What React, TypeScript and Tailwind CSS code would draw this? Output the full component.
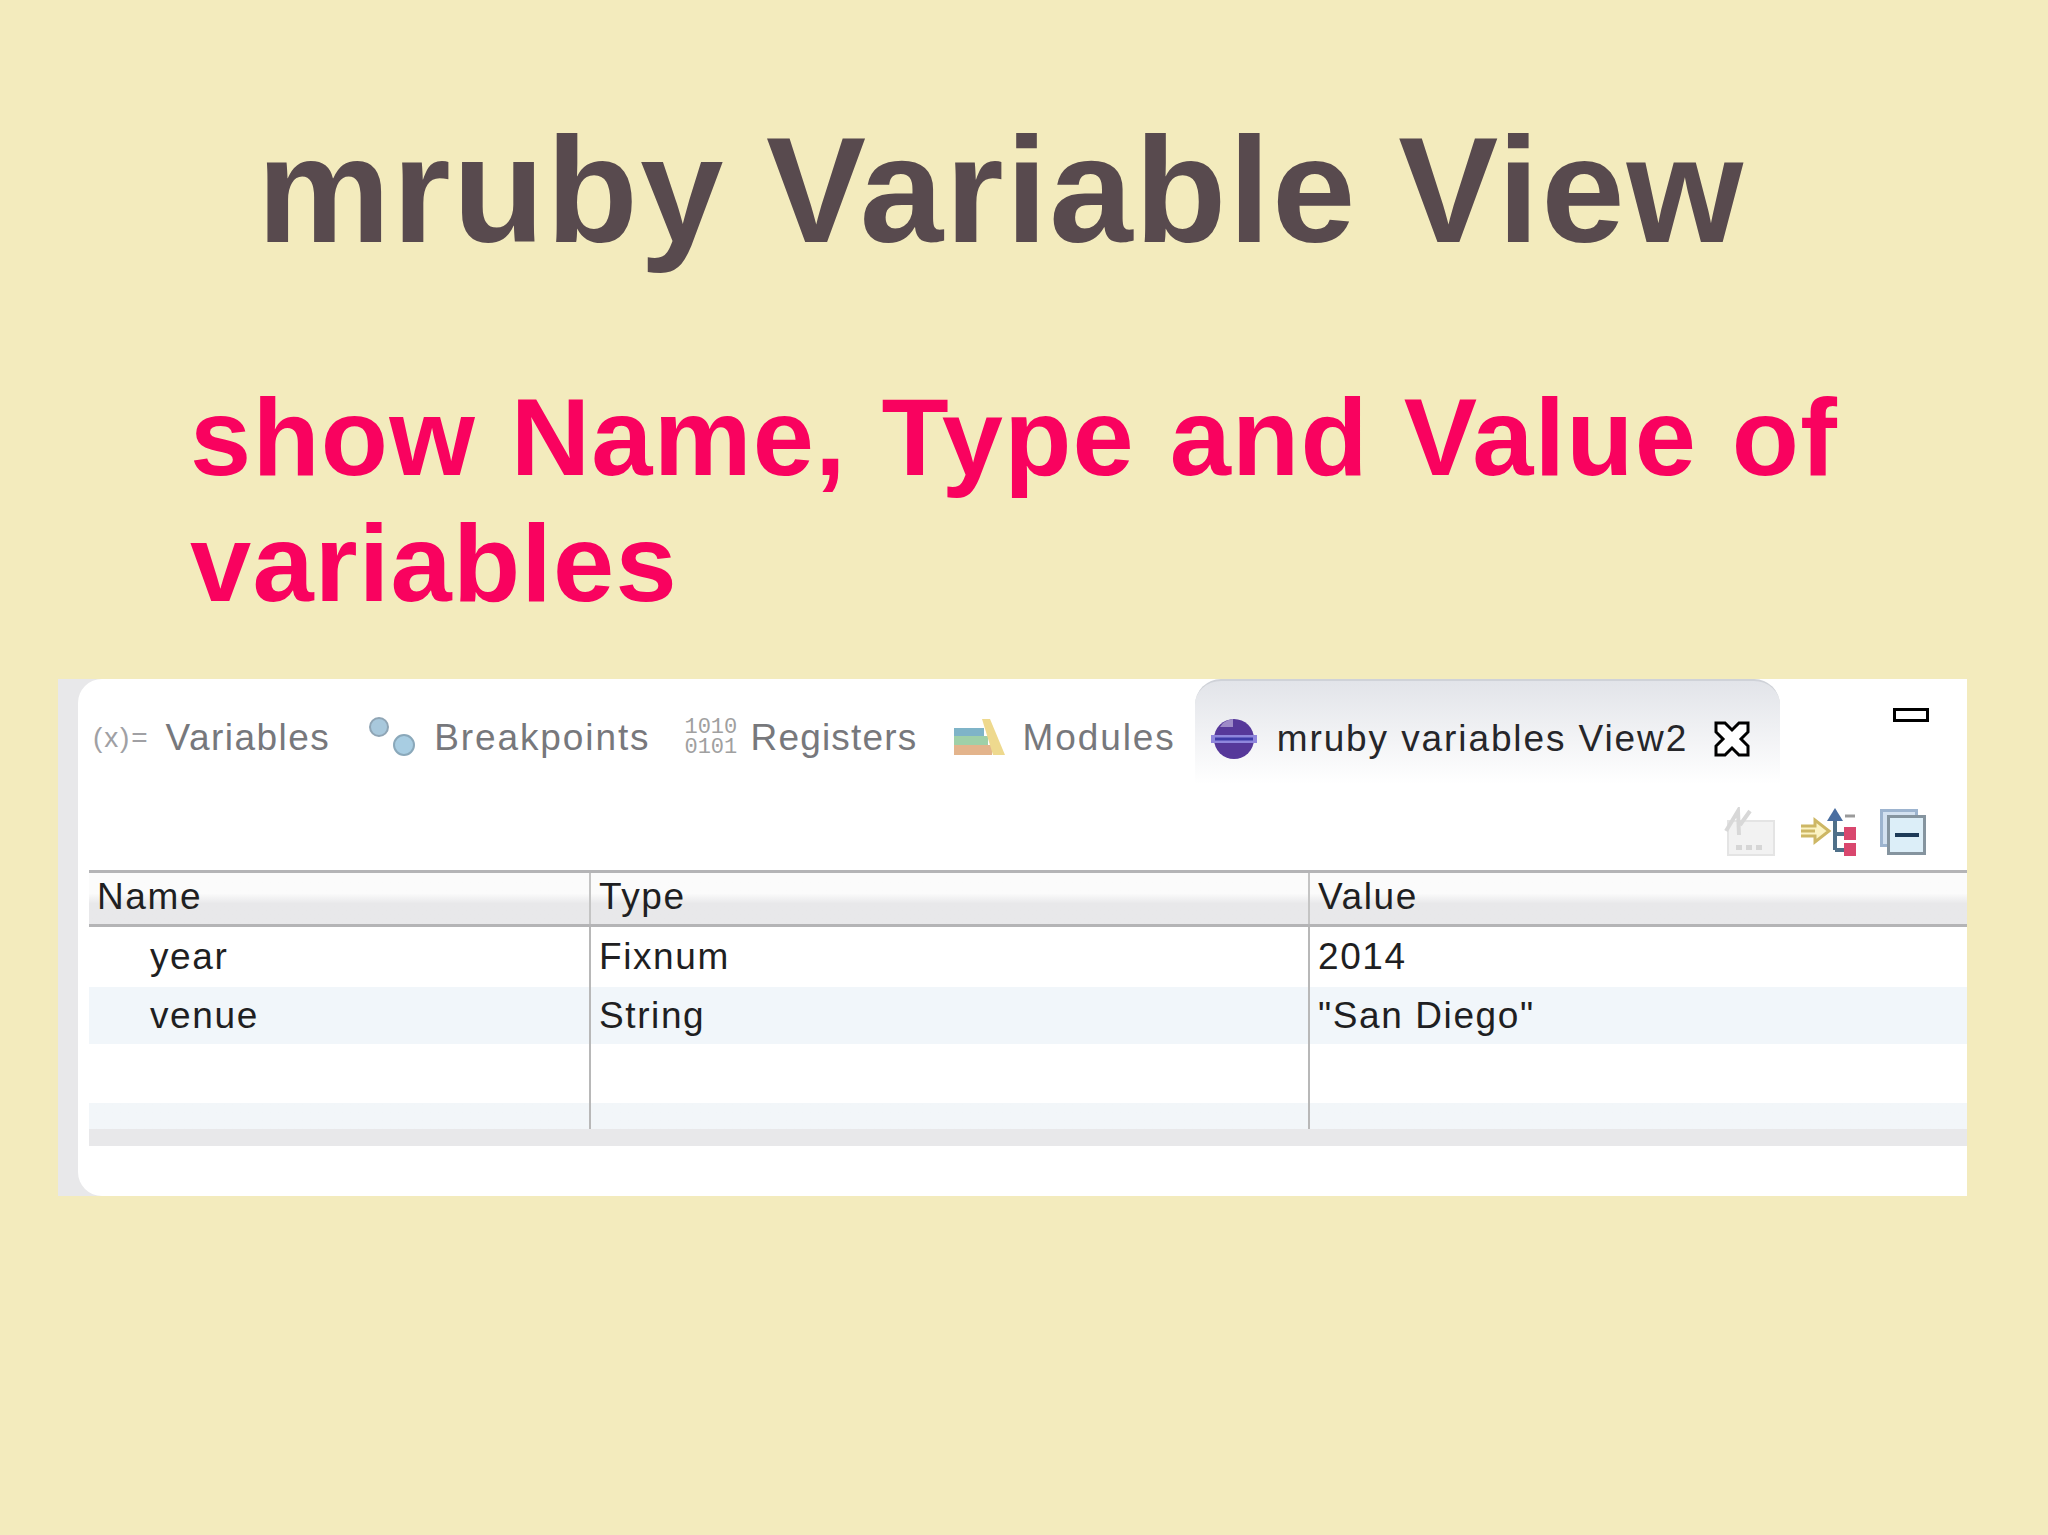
const sans = "font-['Liberation_Sans','Arial',sans-serif]";

const Dots = () => (
  <svg width="50" height="44" viewBox="0 0 50 44">
    <circle cx="11" cy="11" r="9" fill="#a8c8dc" stroke="#8fa5b5" strokeWidth="2" />
    <circle cx="36" cy="29" r="10" fill="#a8cde2" stroke="#8aa8ba" strokeWidth="2" />
  </svg>
);

const ModulesIcon = () => (
  <svg width="54" height="42" viewBox="0 0 54 42">
    <path d="M2 11h30v8H2z" fill="#7fb4c8" />
    <path d="M2 19h34v9H2z" fill="#9fd0a8" />
    <path d="M2 28h38v10H2z" fill="#e3b48c" />
    <path d="M30 2h8l15 36H41z" fill="#eed98e" />
  </svg>
);

const EclipseIcon = () => (
  <svg width="50" height="46" viewBox="0 0 50 46">
    <circle cx="25" cy="23" r="20" fill="#56389a" />
    <path d="M14 7a20 20 0 0 1 10-4v8H11z" fill="#9d8ac8" />
    <path d="M2 19h46v8H2z" fill="#8f86dc" />
    <path d="M6 23h38" stroke="#3d3aa8" strokeWidth="3" />
  </svg>
);

const CloseIcon = () => (
  <svg width="36" height="36" viewBox="0 0 36 36">
    <path d="M2 2h9l7 7 7-7h9v9l-7 7 7 7v9h-9l-7-7-7 7H2v-9l7-7-7-7z" fill="#fff" stroke="#000" strokeWidth="3" />
  </svg>
);

const DisabledIcon = () => (
  <svg width="54" height="50" viewBox="0 0 54 50">
    <path d="M6 14h46v34H6z" fill="#f2f2f2" stroke="#e4e4e4" strokeWidth="2" />
    <path d="M4 24L16 4l1 24M18 18L28 4" fill="none" stroke="#d8d8d8" strokeWidth="4" />
    <path d="M14 38h6v5h-6zM24 38h6v5h-6zM34 38h6v5h-6z" fill="#d6d6d6" />
  </svg>
);

const TreeIcon = () => (
  <svg width="58" height="50" viewBox="0 0 58 50">
    <path d="M2 19h14v-6l14 11-14 11v-6H2M2 24h14" fill="#fbf3c4" stroke="#cdb765" strokeWidth="3" />
    <path d="M36 14v29M36 27h12M36 43h12" fill="none" stroke="#4f7089" strokeWidth="4" />
    <path d="M36 1l8 13H28z" fill="#4a6ea0" />
    <path d="M46 9h10" stroke="#9a9a9a" strokeWidth="3" />
    <rect x="45" y="20" width="12" height="13" fill="#d9476e" />
    <rect x="45" y="36" width="12" height="13" fill="#d9476e" />
  </svg>
);

const CollapseIcon = () => (
  <div className="relative h-[46px] w-[46px]">
    <div className="absolute top-0 left-0 h-[38px] w-[38px] border-[3px] border-[#9db4cf] bg-[#d3e1f0]" />
    <div className="absolute top-[6px] left-[7px] flex h-[40px] w-[39px] items-center justify-center border-[3px] border-[#85949f] bg-[#dceef8]">
      <div className="h-[4px] w-[24px] bg-[#1d3a58]" />
    </div>
  </div>
);

export default function App() {
  return (
    <div className={`h-[1535px] w-[2048px] overflow-hidden bg-[#f3ebbd] ${sans}`}>
      <h1 className="pt-[110px] pl-[257px] text-[150px] leading-[160px] font-bold tracking-[2px] [word-spacing:-3px] text-[#584a4e]">
        mruby Variable View
      </h1>
      <p className="mt-[104px] ml-[190px] w-[1740px] text-[110px] leading-[126px] font-bold tracking-[1.2px] [word-spacing:3px] text-[#f9025f]">
        show Name, Type and Value of variables
      </p>
      <div className="mt-[53px] ml-[58px] h-[517px] w-[1909px] bg-[#e8e8ea] pl-[20px]">
        <div className="flex h-full flex-col rounded-l-[24px] bg-white">
          <div className="flex h-[105px] items-center pt-[12px] text-[37px] tracking-[1.9px] text-[#77787c]">
            <span className="ml-[15px] text-[28px] text-[#a0a0a4]">(x)=</span>
            <span className="ml-[16px] tracking-[1.45px]">Variables</span>
            <span className="ml-[38px]"><Dots /></span>
            <span className="ml-[16px]">Breakpoints</span>
            <span className="ml-[34px] w-[50px] font-['Liberation_Mono',monospace] text-[22px] leading-[20px] tracking-[0px] text-[#a0a0a0]">1010 0101</span>
            <span className="ml-[16px] tracking-[1.2px]">Registers</span>
            <span className="ml-[34px]"><ModulesIcon /></span>
            <span className="ml-[17px]">Modules</span>
            <div className="-mt-[12px] ml-[19px] flex h-[105px] w-[585px] items-center rounded-t-[26px] border-t-2 border-[#cfd2d8] bg-gradient-to-b from-[#e2e4e9] to-white pt-[12px] pl-[14px] text-[#26262a]">
              <EclipseIcon />
              <span className="ml-[18px]">mruby variables View2</span>
              <span className="ml-[26px]"><CloseIcon /></span>
            </div>
            <div className="mb-[46px] ml-[113px] h-[14px] w-[36px] border-[3px] border-black" />
          </div>
          <div className="flex h-[86px] items-center justify-end gap-[23px] pt-[9px] pr-[41px]">
            <DisabledIcon />
            <TreeIcon />
            <CollapseIcon />
          </div>
          <div className="ml-[11px] flex flex-col text-[37px] tracking-[1.6px] text-[#1f1f22]">
            <div className="grid h-[57px] grid-cols-[500px_719px_1fr] border-y-[3px] border-[#b4b4b6] bg-gradient-to-b from-[#fbfbfb] from-40% to-[#e8e8ea] to-60% leading-[48px]">
              <span className="pl-[8px]">Name</span>
              <span className="border-l-2 border-[#c4c4c4] pl-[8px]">Type</span>
              <span className="border-l-2 border-[#c4c4c4] pl-[8px]">Value</span>
            </div>
            <div className="grid h-[60px] grid-cols-[500px_719px_1fr] items-center">
              <span className="pl-[61px]">year</span>
              <span className="flex h-full items-center border-l-2 border-[#b8b8b8] pl-[8px]">Fixnum</span>
              <span className="flex h-full items-center border-l-2 border-[#b8b8b8] pl-[8px]">2014</span>
            </div>
            <div className="grid h-[57px] grid-cols-[500px_719px_1fr] items-center bg-[#f1f6fa]">
              <span className="pl-[61px]">venue</span>
              <span className="flex h-full items-center border-l-2 border-[#b8b8b8] pl-[8px]">String</span>
              <span className="flex h-full items-center border-l-2 border-[#b8b8b8] pl-[8px]">"San Diego"</span>
            </div>
            <div className="grid h-[85px] grid-cols-[500px_719px_1fr] bg-gradient-to-b from-white from-70% to-[#f2f6f9] to-70%">
              <span />
              <span className="border-l-2 border-[#b8b8b8]" />
              <span className="border-l-2 border-[#b8b8b8]" />
            </div>
            <div className="h-[17px] bg-[#e8e8ea]" />
          </div>
        </div>
      </div>
    </div>
  );
}
